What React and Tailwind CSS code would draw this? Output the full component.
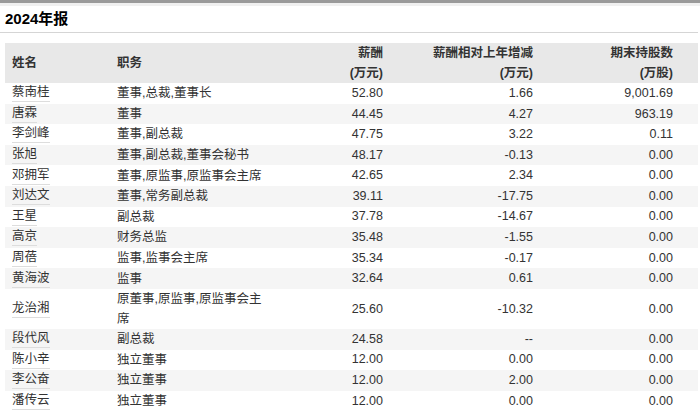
const rows = [
  ["蔡南桂","董事,总裁,董事长","52.80","1.66","9,001.69"],
  ["唐霖","董事","44.45","4.27","963.19"],
  ["李剑峰","董事,副总裁","47.75","3.22","0.11"],
  ["张旭","董事,副总裁,董事会秘书","48.17","-0.13","0.00"],
  ["邓拥军","董事,原监事,原监事会主席","42.65","2.34","0.00"],
  ["刘达文","董事,常务副总裁","39.11","-17.75","0.00"],
  ["王星","副总裁","37.78","-14.67","0.00"],
  ["高京","财务总监","35.48","-1.55","0.00"],
  ["周蓓","监事,监事会主席","35.34","-0.17","0.00"],
  ["黄海波","监事","32.64","0.61","0.00"],
  ["龙治湘","原董事,原监事,原监事会主席","25.60","-10.32","0.00"],
  ["段代风","副总裁","24.58","--","0.00"],
  ["陈小辛","独立董事","12.00","0.00","0.00"],
  ["李公奋","独立董事","12.00","2.00","0.00"],
  ["潘传云","独立董事","12.00","0.00","0.00"],
];
export default function App() {
  return (
    <div className="w-[700px] h-[414px] overflow-hidden bg-white text-[#333] text-[12.5px]" style={{fontFamily:'"Liberation Sans","Noto Sans CJK SC",sans-serif'}}>
      <div className="h-[3px] bg-[#9a9a9a]"></div>
      <div className="h-[3px] bg-[#f0f0f0]"></div>
      <div className="h-[27px] mr-[2px] border-b border-[#d5d5d5] flex items-center pl-[5px] text-[15px] font-bold text-black">2024年报</div>
      <div className="pl-[5px] pr-[2px] pt-[10px]">
        <div className="grid grid-cols-[105px_160px_120px_150px_1fr]">
          <div className="contents font-bold">
            <div className="bg-[#e8e8e8] h-[40px] pl-[7px] flex items-center">姓名</div>
            <div className="bg-[#e8e8e8] h-[40px] pl-[7px] flex items-center">职务</div>
            <div className="bg-[#e8e8e8] h-[40px] pr-[7px] text-right leading-[20px]">薪酬<br/>(万元)</div>
            <div className="bg-[#e8e8e8] h-[40px] pr-[7px] text-right leading-[20px]">薪酬相对上年增减<br/>(万元)</div>
            <div className="bg-[#e8e8e8] h-[40px] pr-[25px] text-right leading-[20px]">期末持股数<br/>(万股)</div>
          </div>
          {rows.map((r,i)=>{
            const bg = i%2===1 ? "bg-[#f5f5f5]" : "bg-white";
            return (
              <div key={i} className="contents">
                <div className={`${bg} pl-[7px] flex items-center min-h-[20.6px]`}><span className="border-b border-[#ddd] leading-[17px]">{r[0]}</span></div>
                <div className={`${bg} pl-[7px] leading-[20px] flex items-center`}>{r[1]}</div>
                <div className={`${bg} pr-[7px] flex items-center justify-end`}>{r[2]}</div>
                <div className={`${bg} pr-[7px] flex items-center justify-end`}>{r[3]}</div>
                <div className={`${bg} pr-[25px] flex items-center justify-end`}>{r[4]}</div>
              </div>
            );
          })}
        </div>
      </div>
    </div>
  );
}
